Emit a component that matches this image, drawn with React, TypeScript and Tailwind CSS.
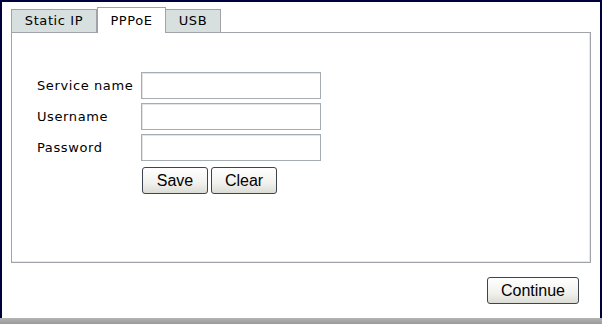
import React from "react";

export default function App() {
  const inputCls =
    "w-[180px] h-[27px] border border-[#a5acb2] bg-white shadow-[inset_1px_1px_0_#e4e4e4] outline-none px-1 text-[13px]";
  const btnCls =
    "h-[27px] rounded-[3px] border border-[#3c4450] bg-[linear-gradient(#ffffff,#f1f1ee_60%,#dcdcd6)] text-[16px] text-black flex items-center justify-center";
  return (
    <div className="w-[602px] h-[324px] flex flex-col bg-white" style={{ fontFamily: '"DejaVu Sans", Verdana, sans-serif' }}>
      <div className="flex-1 border-l-2 border-t-2 border-r-2 border-[#00003c] px-[9px] pt-[5px] flex flex-col">
        {/* Tabs */}
        <div className="flex items-end h-[25px] text-[13px] tracking-[0.6px] text-black">
          <div className="h-[23px] w-[86px] border border-b-0 border-[#a0a4a8] bg-[#d7dfdf] flex items-center justify-center">
            Static IP
          </div>
          <div className="h-[26px] w-[69px] border border-b-0 border-[#a0a4a8] bg-white flex items-center justify-center -mb-px relative z-10">
            PPPoE
          </div>
          <div className="h-[23px] w-[55px] border border-b-0 border-l-0 border-[#a0a4a8] bg-[#d7dfdf] flex items-center justify-center">
            USB
          </div>
        </div>
        {/* Panel */}
        <div className="h-[231px] border border-[#a0a4a8] shadow-[inset_-1px_-1px_0_#e8e8e8] bg-white pt-[39px] pl-[25px]">
          <div className="grid grid-cols-[104px_180px] gap-y-[4px] items-center text-[13px] tracking-[0.6px] text-black">
            <div>Service name</div>
            <input className={inputCls} />
            <div>Username</div>
            <input className={inputCls} />
            <div>Password</div>
            <input className={inputCls} type="password" />
          </div>
          <div className="flex gap-[3px] mt-[6px] ml-[105px]" style={{ fontFamily: '"Liberation Sans", Arial, sans-serif' }}>
            <button className={`${btnCls} w-[66px]`}>Save</button>
            <button className={`${btnCls} w-[66px]`}>Clear</button>
          </div>
        </div>
        <div className="flex justify-end pr-[12px] mt-[14px]" style={{ fontFamily: '"Liberation Sans", Arial, sans-serif' }}>
          <button className={`${btnCls} w-[92px]`}>Continue</button>
        </div>
      </div>
      <div className="h-[6px] bg-[linear-gradient(#b4b4b4,#9a9a9a)]" />
    </div>
  );
}
